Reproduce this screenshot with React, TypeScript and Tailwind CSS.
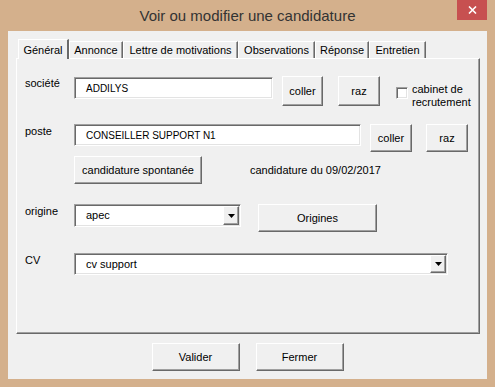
import React from 'react'

const raised =
  'border border-t-white border-l-white border-r-[#696969] border-b-[#696969] shadow-[inset_-1px_-1px_0_#a0a0a0] bg-[#f0f0f0]'
const sunken =
  'border border-t-[#a0a0a0] border-l-[#a0a0a0] border-r-white border-b-white shadow-[inset_1px_1px_0_#696969,inset_-1px_-1px_0_#e3e3e3] bg-white'

function Button({ label, className }: { label: string; className: string }) {
  return (
    <div className={`${raised} ${className} flex items-center justify-center text-[11px] text-black leading-none`}>
      {label}
    </div>
  )
}

function TextBox({ value, className, caps }: { value: string; className: string; caps?: boolean }) {
  return (
    <div className={`${sunken} ${className} flex items-center pl-[11px] text-black ${caps ? 'text-[10px]' : 'text-[11px]'}`}>
      {value}
    </div>
  )
}

function Combo({ value, className }: { value: string; className: string }) {
  return (
    <div className={`${sunken} ${className} flex p-[1px]`}>
      <div className="flex-1 flex items-center pl-[10px] text-[11px] text-black">{value}</div>
      <div className={`${raised} w-[16px] h-full flex items-center justify-center`}>
        <svg width="7" height="4" viewBox="0 0 7 4">
          <path d="M0 0h7L3.5 4z" fill="#000" />
        </svg>
      </div>
    </div>
  )
}

const tabs = [
  { name: 'Général', w: 'w-[51px]' },
  { name: 'Annonce', w: 'w-[54px]' },
  { name: 'Lettre de motivations', w: 'w-[115px]' },
  { name: 'Observations', w: 'w-[77px]' },
  { name: 'Réponse', w: 'w-[54px]' },
  { name: 'Entretien', w: 'w-[57px]' },
]

export default function App() {
  return (
    <div className="w-[495px] h-[387px] bg-[#d4b08c] flex flex-col font-['Liberation_Sans',Arial,sans-serif] relative">
      {/* barre de titre */}
      <div className="h-[31px] flex items-center justify-center pt-[2px]">
        <span className="text-[15px] text-[#333]">Voir ou modifier une candidature</span>
      </div>
      <div className="absolute top-0 right-[8px] w-[30px] h-[20px] bg-[#c75050] flex items-center justify-center">
        <svg width="9" height="8" viewBox="0 0 9 8">
          <path d="M1 0.5l7 7M8 0.5l-7 7" stroke="#fff" strokeWidth="1.6" />
        </svg>
      </div>

      {/* zone client */}
      <div className="mx-[8px] mb-[8px] flex-1 bg-[#f0f0f0] flex flex-col">
        {/* onglets */}
        <div className="mt-[8px] ml-[10px] h-[19px] flex items-end relative z-10">
          {tabs.map((t, i) =>
            i === 0 ? (
              <div
                key={t.name}
                className={`${t.w} h-[20px] -mb-[1px] bg-[#f0f0f0] border-t border-l border-white border-r-2 border-r-[#696969] flex items-start justify-center pt-[2px] text-[11px] text-black`}
              >
                {t.name}
              </div>
            ) : (
              <div
                key={t.name}
                className={`${t.w} h-[17px] bg-[#f0f0f0] border-t border-l border-white border-r border-r-[#696969] shadow-[inset_-1px_0_0_#a0a0a0] flex items-center justify-center text-[11px] text-black`}
              >
                {t.name}
              </div>
            )
          )}
        </div>

        {/* panneau */}
        <div className="ml-[8px] w-[464px] h-[276px] border-t border-l border-white border-r border-b border-r-[#696969] border-b-[#696969] shadow-[inset_-1px_-1px_0_#a0a0a0] flex flex-col pl-[8px] text-[11px] text-black">
          <div className="mt-[17px] h-[30px] flex items-start">
            <div className="w-[49px] mt-[1px] leading-[13px]">société</div>
            <TextBox value="ADDILYS" caps className="w-[199px] h-[22px] mt-[1px]" />
            <Button label="coller" className="ml-[9px] w-[41px] h-[30px]" />
            <Button label="raz" className="ml-[15px] w-[42px] h-[30px]" />
            <div className="ml-[16px] mt-[7px] flex items-start">
              <div className={`${sunken} w-[12px] h-[12px] mt-[4px]`} />
              <div className="ml-[4px] leading-[13px]">
                cabinet de
                <br />
                recrutement
              </div>
            </div>
          </div>

          <div className="mt-[18px] h-[28px] flex items-start">
            <div className="w-[49px] mt-[1px] leading-[13px]">poste</div>
            <TextBox value="CONSEILLER SUPPORT N1" caps className="w-[287px] h-[22px]" />
            <Button label="coller" className="ml-[9px] w-[42px] h-[28px]" />
            <Button label="raz" className="ml-[14px] w-[42px] h-[28px]" />
          </div>

          <div className="mt-[4px] h-[28px] flex items-center">
            <div className="w-[49px]" />
            <Button label="candidature spontanée" className="w-[128px] h-[28px]" />
            <div className="ml-[48px]">candidature du 09/02/2017</div>
          </div>

          <div className="mt-[20px] h-[28px] flex items-start">
            <div className="w-[49px] mt-[1px] leading-[13px]">origine</div>
            <Combo value="apec" className="w-[167px] h-[23px]" />
            <Button label="Origines" className="ml-[17px] w-[119px] h-[28px]" />
          </div>

          <div className="mt-[21px] h-[22px] flex items-start">
            <div className="w-[49px] mt-[1px] leading-[13px]">CV</div>
            <Combo value="cv support" className="w-[374px] h-[22px]" />
          </div>
        </div>

        {/* boutons */}
        <div className="mt-[9px] flex justify-center gap-[16px]">
          <Button label="Valider" className="w-[88px] h-[28px]" />
          <Button label="Fermer" className="w-[88px] h-[28px]" />
        </div>
      </div>
    </div>
  )
}
